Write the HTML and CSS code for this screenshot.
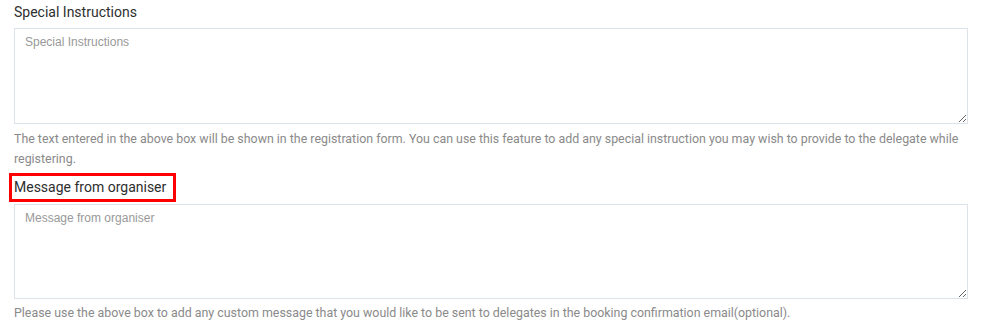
FILE: index.html
```html
<!DOCTYPE html>
<html lang="en">
<head>
<meta charset="utf-8">
<title>Instructions</title>
<link rel="stylesheet" href="styles.css">
</head>
<body>
<div class="form">
  <div class="field">
    <label class="label">Special Instructions</label>
    <textarea class="box" placeholder="Special Instructions"></textarea>
    <p class="help">The text entered in the above box will be shown in the registration form. You can use this feature to add any special instruction you may wish to provide to the delegate while registering.</p>
  </div>
  <div class="field second">
    <label class="label"><span class="marked">Message from organiser</span></label>
    <textarea class="box box2" placeholder="Message from organiser"></textarea>
    <p class="help">Please use the above box to add any custom message that you would like to be sent to delegates in the booking confirmation email(optional).</p>
  </div>
</div>
</body>
</html>
```
FILE: styles.css
```css
html, body {
  margin: 0;
  padding: 0;
  background: #ffffff;
}
.form {
  padding: 2px 0 0 14px;
  width: 954px;
  font-family: Roboto, "Liberation Sans", sans-serif;
}
.field {
  display: flex;
  flex-direction: column;
}
.second {
  margin-top: 8px;
}
.label {
  display: block;
  font-size: 14px;
  line-height: 20px;
  color: #2e2e2e;
  margin-bottom: 6px;
}
.second .label {
  margin-bottom: 7px;
}
.marked {
  position: relative;
}
.marked::after {
  content: "";
  position: absolute;
  left: -5px;
  right: -10px;
  top: -6px;
  bottom: -7px;
  border: 3px solid #ff0000;
}
.box {
  box-sizing: border-box;
  width: 954px;
  height: 96px;
  margin: 0;
  padding: 6px 10px;
  border: 1px solid #dde3ea;
  border-radius: 0;
  font-family: Arial, "Liberation Sans", sans-serif;
  font-size: 12px;
  color: #555;
  resize: vertical;
}
.box2 {
  height: 95px;
}
.box::placeholder {
  color: #999999;
}
.help {
  margin: 5px 0 0 0;
  font-size: 12.4px;
  line-height: 20px;
  color: #8a8a8a;
}
.second .help {
  margin-top: 4px;
}
```
